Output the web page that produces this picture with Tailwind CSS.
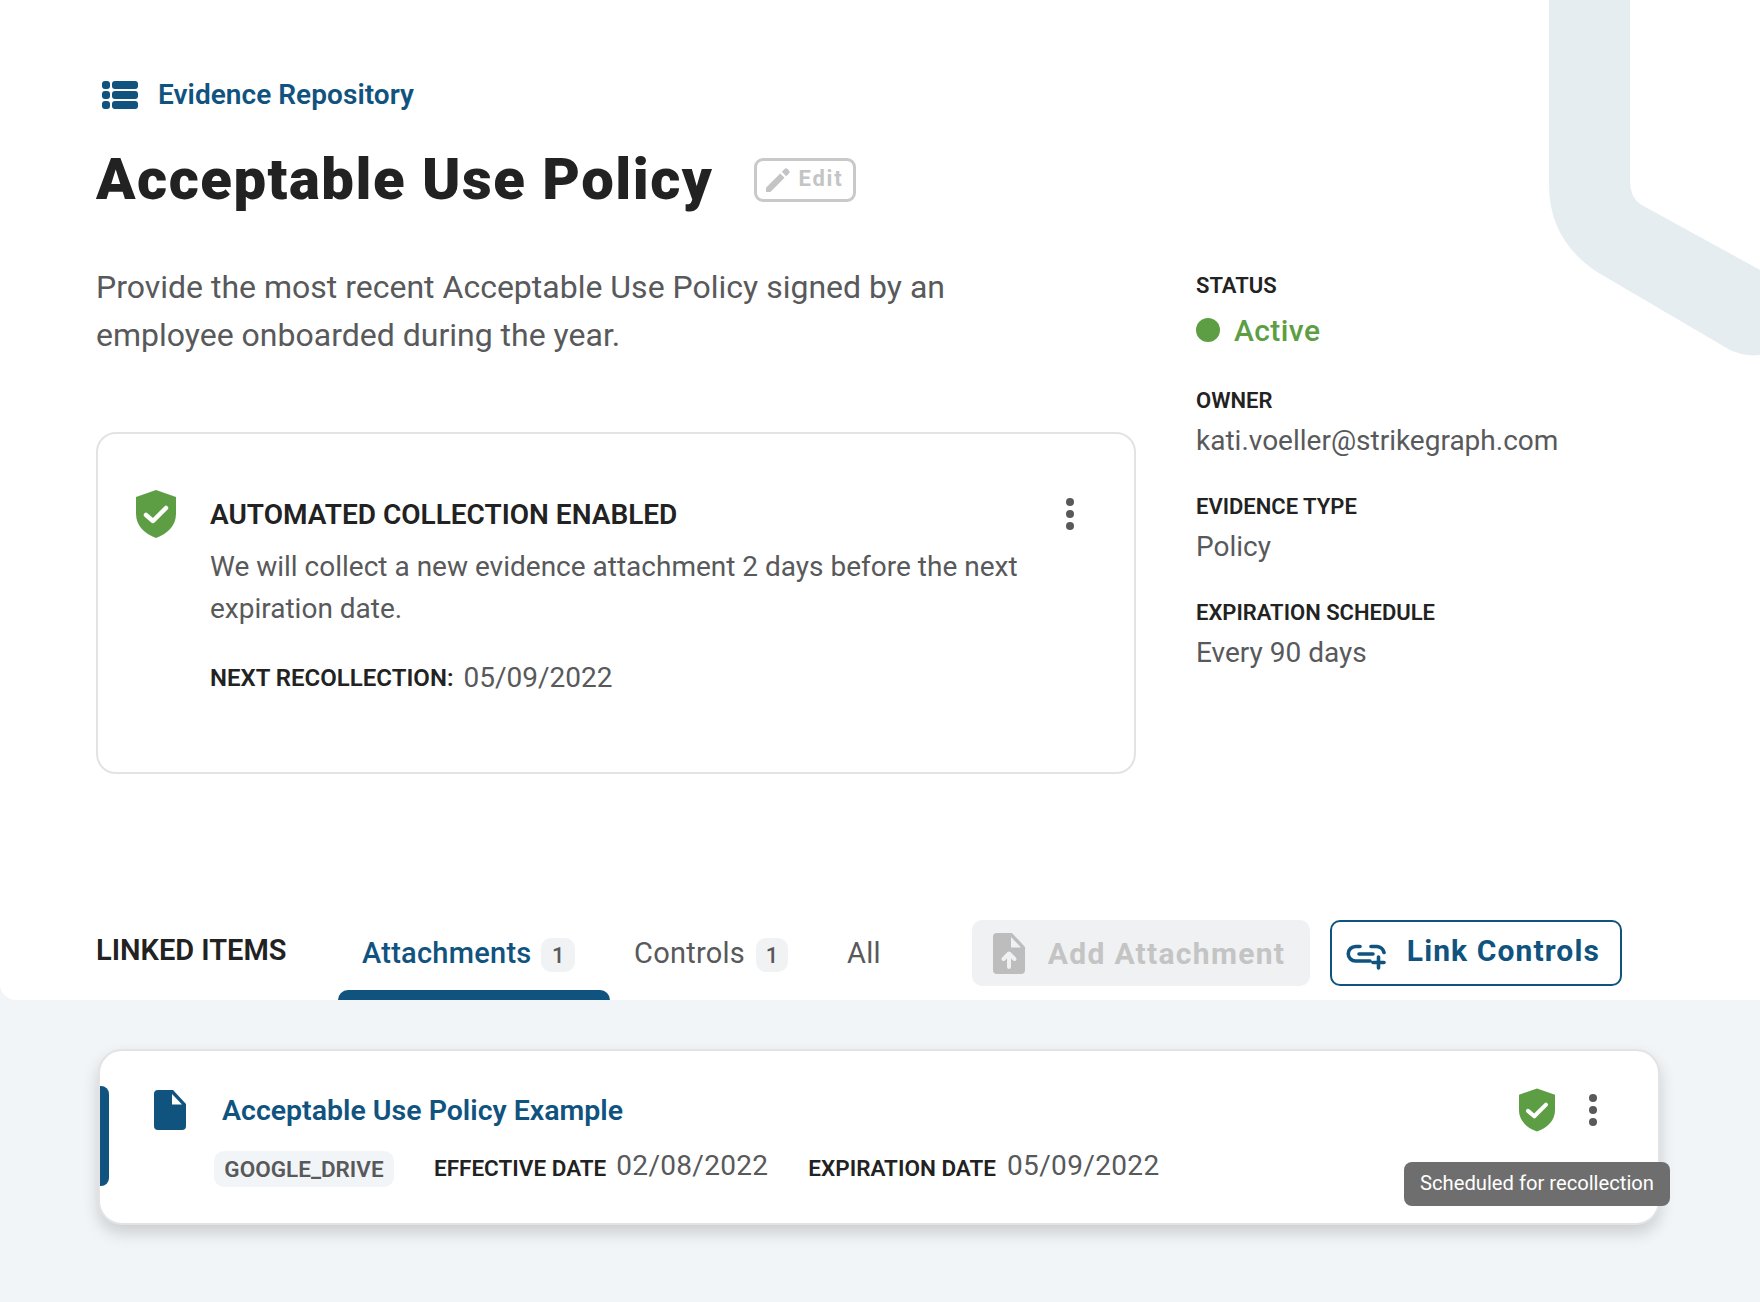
<!DOCTYPE html>
<html lang="en">
<head>
    <meta charset="UTF-8">
    <title>Acceptable Use Policy</title>
    <script src="https://cdn.jsdelivr.net/npm/@tailwindcss/browser@4"></script>
</head>
<body class="font-['Roboto',sans-serif] bg-[#f1f5f8] text-[#58595b]">
<div class="relative w-[1760px] h-[1302px] overflow-hidden">
    <!-- top white section -->
    <div class="relative h-[1000px] bg-white rounded-bl-[16px] pl-[96px]">
        <svg class="absolute left-0 top-0" width="1760" height="360" viewBox="0 0 1760 360"><path fill="#e6edf1" d="M1549 0H1630V180Q1630 197 1640 204L1760 270V355Q1745 357 1730 350L1597 272Q1549 240 1549 185Z"/></svg>

        <div class="relative pt-[80px]">
            <a class="flex items-center gap-[20px] pl-[6px] h-[30px] text-[#10537f] text-[28px] font-semibold tracking-[0.05px]">
                <svg width="36" height="28" viewBox="0 0 36 28" fill="#10537f"><rect x="0" y="0" width="8" height="8" rx="3"/><rect x="0" y="10" width="8" height="8" rx="3"/><rect x="0" y="20" width="8" height="8" rx="3"/><rect x="10" y="0" width="26" height="8" rx="3"/><rect x="10" y="10" width="26" height="8" rx="3"/><rect x="10" y="20" width="26" height="8" rx="3"/></svg>
                <span>Evidence Repository</span>
            </a>
            <div class="flex items-center mt-[23px] h-[92px]">
                <h1 class="text-[58px] font-black text-[#222222] leading-none tracking-[1.5px]">Acceptable Use Policy</h1>
                <button class="ml-[41px] mt-[1px] flex items-center gap-[8px] w-[102px] h-[44px] pl-[9px] border-[3px] border-[#c9c9c9] rounded-[9px] text-[#c4c4c4] text-[22px] font-bold tracking-[1.800px]">
                    <svg width="24" height="24" viewBox="0 0 22 22" fill="#c4c4c4"><path d="M0 22V18L13 5L17 9L4 22ZM14.500 3.500L17 1a2 2 0 0 1 2.800 0L21 2.200a2 2 0 0 1 0 2.800L18.500 7.500Z"/></svg>
                    <span class="-mt-[2px]">Edit</span>
                </button>
            </div>

            <div class="flex mt-[38px]">
                <div class="w-[1040px]">
                    <p class="w-[900px] text-[32px] leading-[48px]">Provide the most recent Acceptable Use Policy signed by an employee onboarded during the year.</p>
                    <div class="relative mt-[73px] h-[342px] border-2 border-[#e3e3e3] rounded-[20px] pl-[112px] pt-[63px]">
                        <svg class="absolute left-[38px] top-[56px]" width="40" height="48" viewBox="0 0 40 48"><path fill="#5d9e45" d="M20 0L40 7V24C40 36 31 44 20 48C9 44 0 36 0 24V7Z"/><path fill="none" stroke="#fff" stroke-width="4.500" stroke-linecap="round" stroke-linejoin="round" d="M10 25L17 31L30 18"/></svg>
                        <h2 class="text-[#222222] text-[28px] font-semibold leading-[36px]">AUTOMATED COLLECTION ENABLED</h2>
                        <p class="mt-[13px] w-[840px] text-[28px] leading-[42px]">We will collect a new evidence attachment 2 days before the next expiration date.</p>
                        <div class="flex items-center mt-[27px] h-[42px]">
                            <span class="text-[#222222] text-[24px] font-semibold">NEXT RECOLLECTION:</span>
                            <span class="ml-[10px] text-[28px]">05/09/2022</span>
                        </div>
                        <div class="absolute left-[968px] top-[64px] flex flex-col gap-[4px]">
                            <span class="w-[8px] h-[8px] rounded-full bg-[#58595b]"></span><span class="w-[8px] h-[8px] rounded-full bg-[#58595b]"></span><span class="w-[8px] h-[8px] rounded-full bg-[#58595b]"></span>
                        </div>
                    </div>
                </div>

                <div class="ml-[60px] pt-[8px]">
                    <div class="text-[#222222] text-[22px] font-semibold leading-[30px]">STATUS</div>
                    <div class="flex items-center gap-[14px] mt-[9px] h-[40px] text-[#5d9e45] text-[30px] font-medium tracking-[0.4px]">
                        <span class="w-[24px] h-[24px] rounded-full bg-[#5d9e45]"></span><span>Active</span>
                    </div>
                    <div class="text-[#222222] text-[22px] font-semibold leading-[30px] mt-[36px]">OWNER</div>
                    <div class="text-[28px] leading-[40px] mt-[5px]">kati.voeller@strikegraph.com</div>
                    <div class="text-[#222222] text-[22px] font-semibold leading-[30px] mt-[31px]">EVIDENCE TYPE</div>
                    <div class="text-[28px] leading-[40px] mt-[5px]">Policy</div>
                    <div class="text-[#222222] text-[22px] font-semibold leading-[30px] mt-[31px]">EXPIRATION SCHEDULE</div>
                    <div class="text-[28px] leading-[40px] mt-[5px]">Every 90 days</div>
                </div>
            </div>
        </div>

        <!-- linked items tabs -->
        <div class="absolute left-[96px] right-0 top-[920px] h-[80px] flex">
            <div class="w-[242px] h-[62px] flex items-center text-[#222222] text-[29px] font-semibold">LINKED ITEMS</div>
            <div class="relative w-[272px] h-[80px] pl-[24px] pt-[13px] flex items-start gap-[10px] text-[#10537f] text-[29px] font-medium tracking-[0.25px]">
                <span class="leading-[40px]">Attachments</span>
                <span class="mt-[5px] w-[34px] h-[34px] rounded-[10px] bg-[#f1f2f4] text-[#58595b] text-[22px] font-medium flex items-center justify-center">1</span>
                <span class="absolute left-0 right-0 bottom-0 h-[10px] bg-[#10537f] rounded-t-[10px]"></span>
            </div>
            <div class="ml-[24px] pt-[13px] flex items-start gap-[11px] text-[29px] tracking-[0.25px]">
                <span class="leading-[40px]">Controls</span>
                <span class="mt-[5px] w-[32px] h-[34px] rounded-[10px] bg-[#f1f2f4] text-[22px] font-medium flex items-center justify-center">1</span>
            </div>
            <div class="ml-[59px] pt-[13px] text-[29px] leading-[40px] tracking-[0.25px]">All</div>
            <button class="ml-[91px] w-[338px] h-[66px] rounded-[10px] bg-[#f0f1f3] flex items-center pl-[21px] gap-[23px] text-[#c4c4c4] text-[30px] font-bold tracking-[1.3px]">
                <svg width="32" height="41" viewBox="0 0 32 41"><path fill="#bdbdbd" d="M4 0H19L32 14V37a4 4 0 0 1-4 4H4a4 4 0 0 1-4-4V4a4 4 0 0 1 4-4Z"/><path fill="#f0f1f3" d="M18 4L28 14.500H18Z"/><path fill="none" stroke="#f0f1f3" stroke-width="4" stroke-linecap="round" stroke-linejoin="round" d="M16 34V21M10.500 26L16 20.500L21.500 26"/></svg>
                <span>Add Attachment</span>
            </button>
            <button class="ml-[20px] w-[292px] h-[66px] rounded-[10px] border-2 border-[#10537f] flex items-center pl-[14px] gap-[21px] text-[#10537f] text-[30px] font-bold tracking-[1.1px]">
                <svg class="mt-[8px]" width="40" height="26" viewBox="0 0 40 26" fill="none" stroke="#10537f" stroke-width="3.600" stroke-linecap="round"><path d="M14 2.500H9.500a7.250 7.250 0 0 0 0 14.500H24M25 2.500H31a8 8 0 0 1 7 6M13 10H27M27 18.500H38M32.500 13V24"/></svg>
                <span class="-mt-[6px]">Link Controls</span>
            </button>
        </div>
    </div>

    <!-- attachment card -->
    <div class="relative ml-[98px] mt-[49px] w-[1562px] h-[176px] bg-white border-2 border-[#e3e3e3] rounded-[24px] shadow-[0_8px_16px_rgba(0,0,0,0.16)]">
        <span class="absolute left-0 top-[35px] w-[9px] h-[100px] bg-[#10537f] rounded-r-[8px]"></span>
        <svg class="absolute left-[54px] top-[39px]" width="32" height="40" viewBox="0 0 32 40"><path fill="#10537f" d="M4 0H19L32 14V36a4 4 0 0 1-4 4H4a4 4 0 0 1-4-4V4a4 4 0 0 1 4-4Z"/><path fill="#fff" d="M18 4L28 14.500H18Z"/></svg>
        <div class="absolute left-[122px] top-[42px] text-[#10537f] text-[28.500px] font-semibold leading-[36px]">Acceptable Use Policy Example</div>
        <div class="absolute left-[114px] top-[98px] flex items-center h-[34px]">
            <span class="h-[36px] w-[180px] mt-[6px] rounded-[10px] bg-[#f1f5f8] flex items-center justify-center text-[22.500px] font-semibold pt-[2px]">GOOGLE_DRIVE</span>
            <span class="mt-[5px] ml-[40px] text-[#222222] text-[22.500px] font-semibold">EFFECTIVE DATE</span>
            <span class="ml-[10px] text-[28px] tracking-[0.3px]">02/08/2022</span>
            <span class="mt-[5px] ml-[40px] text-[#222222] text-[22.500px] font-semibold">EXPIRATION DATE</span>
            <span class="ml-[11px] text-[28px] tracking-[0.35px]">05/09/2022</span>
        </div>
        <svg class="absolute left-[1419px] top-[37px]" width="36" height="44" viewBox="0 0 40 48"><path fill="#5d9e45" d="M20 0L40 7V24C40 36 31 44 20 48C9 44 0 36 0 24V7Z"/><path fill="none" stroke="#fff" stroke-width="4.500" stroke-linecap="round" stroke-linejoin="round" d="M10 25L17 31L30 18"/></svg>
        <div class="absolute left-[1489px] top-[43px] flex flex-col gap-[4px]">
            <span class="w-[8px] h-[8px] rounded-full bg-[#58595b]"></span><span class="w-[8px] h-[8px] rounded-full bg-[#58595b]"></span><span class="w-[8px] h-[8px] rounded-full bg-[#58595b]"></span>
        </div>
        <div class="absolute left-[1304px] top-[111px] w-[266px] h-[44px] pb-[2px] rounded-[8px] bg-[#6e6e6e] flex items-center justify-center text-white text-[20.200px]">Scheduled for recollection</div>
    </div>
</div>
</body>
</html>
